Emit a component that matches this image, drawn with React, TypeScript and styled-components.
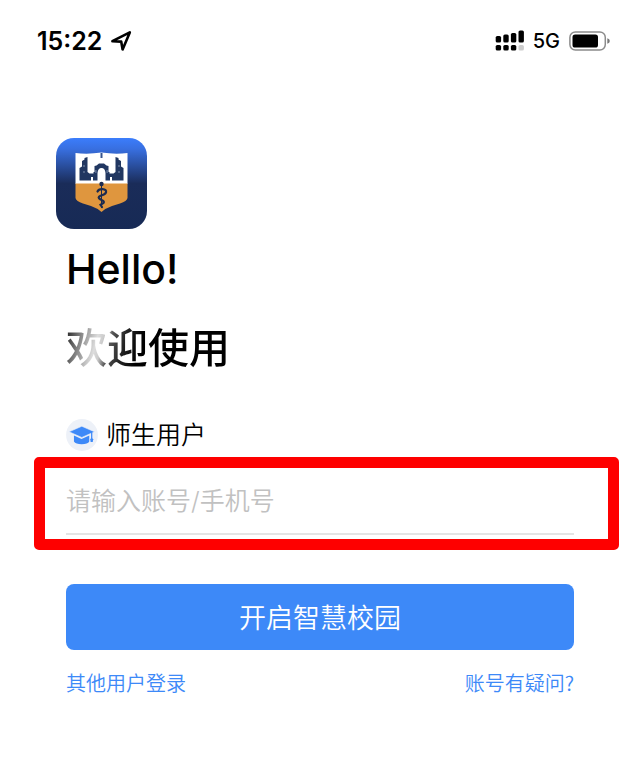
import React, { useState } from "react";
import styled, { createGlobalStyle } from "styled-components";

const BLUE = "#3d89f8";

const GlobalStyle = createGlobalStyle`
  * { box-sizing: border-box; }
  body {
    margin: 0;
    background: #fff;
    color: #000;
    font-family: Inter, "Noto Sans CJK SC", sans-serif;
  }
`;

const Screen = styled.div`
  padding-bottom: 40px;
`;

const StatusBar = styled.header`
  display: flex;
  align-items: center;
  justify-content: space-between;
  height: 82px;
  padding: 0 30px 0 37px;
`;

const StatusGroup = styled.div<{ $gap: number }>`
  display: flex;
  align-items: center;
  gap: ${(p) => p.$gap}px;
`;

const Time = styled.span`
  font-size: 25px;
  line-height: 32px;
  font-weight: 600;
`;

const Network = styled.span`
  font-size: 20px;
  line-height: 28px;
  font-weight: 450;
`;

const Main = styled.main`
  padding: 56px 66px 0;
`;

const Logo = styled.svg`
  display: block;
  width: 91px;
  height: 91px;
  margin-left: -10px;
`;

const Greeting = styled.h1`
  margin: 16px 0 0;
  font-size: 41px;
  line-height: 48px;
  font-weight: 500;
`;

const Welcome = styled.h2`
  width: fit-content;
  margin: 22px 0 0;
  font-family: "Noto Sans CJK SC", sans-serif;
  font-size: 41px;
  line-height: 60px;
  font-weight: 500;
  color: transparent;
  background: linear-gradient(105deg, #222 4px, #888 20px, #ddd 36px, #ccc 42px, #555 50px, #222 64px, #000 80px);
  background-clip: text;
`;

const UserType = styled.label`
  display: flex;
  align-items: flex-start;
  gap: 8px;
  width: fit-content;
  margin-top: 44px;
  font-family: "Noto Sans CJK SC", sans-serif;
  font-size: 25px;
  line-height: 28px;
  font-weight: 350;
`;

const Highlight = styled.div`
  margin: 6px -45px 0 -32px;
  padding: 11px 34px 4px 21px;
  border: 11px solid #fe0000;
  border-radius: 5px;
`;

const AccountInput = styled.input`
  display: block;
  width: 100%;
  height: 56px;
  padding: 0 0 10px;
  border: 0;
  border-bottom: 2px solid #e4e4e4;
  border-radius: 0;
  outline: 0;
  background: transparent;
  font-family: Inter, "Noto Sans CJK SC", sans-serif;
  font-size: 25px;
  font-weight: 350;
  &::placeholder {
    color: #c1c1c1;
    opacity: 1;
  }
`;

const SubmitButton = styled.button`
  display: block;
  width: 100%;
  height: 66px;
  margin-top: 34px;
  padding: 0;
  border: 0;
  border-radius: 8px;
  background: ${BLUE};
  color: #fff;
  font-family: "Noto Sans CJK SC", sans-serif;
  font-size: 27px;
  line-height: 40px;
  font-weight: 350;
  cursor: pointer;
`;

const Links = styled.nav`
  display: flex;
  justify-content: space-between;
  margin-top: 19px;
`;

const TextLink = styled.a`
  color: ${BLUE};
  font-family: "Noto Sans CJK SC", sans-serif;
  font-size: 20px;
  line-height: 28px;
  font-weight: 350;
  text-decoration: none;
`;

function LocationIcon() {
  return (
    <svg width="22" height="22" viewBox="0 0 22 22" aria-hidden="true">
      <path d="M2.4 11.2 L19.8 2.4 L12.6 19.4 L11.2 11.6 Z" fill="none" stroke="#000" strokeWidth="2.6" strokeLinejoin="round" />
    </svg>
  );
}

function SignalIcon() {
  const tops = [6, 4.5, 3, 0.5];
  return (
    <svg width="29" height="22" viewBox="0 0 29 22" aria-hidden="true">
      {tops.map((top, i) => (
        <g key={top}>
          <rect x={0.7 + i * 7.6} y={top} width="5.4" height={12.5 - top} rx="1.6" />
          <rect x={0.7 + i * 7.6} y="15" width="5.4" height="5.6" rx="1.6" fill={i === 3 ? "#ccc" : "#000"} />
        </g>
      ))}
    </svg>
  );
}

function BatteryIcon() {
  return (
    <svg width="41" height="20" viewBox="0 0 41 20" aria-hidden="true">
      <rect x="0.9" y="0.9" width="35.4" height="18.2" rx="5.5" fill="none" stroke="#8b8b8b" strokeWidth="1.5" />
      <rect x="3.5" y="3.5" width="25.5" height="13" rx="2.6" />
      <path d="M38.3 7.2 Q40.8 8 40.8 10 Q40.8 12 38.3 12.8 Z" fill="#777" />
    </svg>
  );
}

function SchoolLogo() {
  return (
    <Logo viewBox="0 0 91 91" role="img" aria-label="校徽">
      <defs>
        <linearGradient id="tile" x1="0" y1="0" x2="0" y2="1">
          <stop offset="0" stopColor="#3b7dfc" />
          <stop offset="0.12" stopColor="#386fe0" />
          <stop offset="0.5" stopColor="#1a2c59" />
          <stop offset="1" stopColor="#172a55" />
        </linearGradient>
      </defs>
      <rect width="91" height="91" rx="18" fill="url(#tile)" />
      <path d="M19.5 15 Q32 16.5 45.5 14.5 Q59 16.5 71.5 15 V46 H19.5 Z" fill="#fff" />
      <path d="M19.5 45.5 H71.5 V60 Q71 63 64 65.5 L56 68 Q50 70 45.5 74 Q41 70 35 68 L27 65.5 Q20 63 19.5 60 Z" fill="#df963e" />
      <path
        d="M23.5 42.5 V30 L26 28.5 V23 L28.5 21.5 V20 L31.5 19 V34 L33.5 35.5 H37.5 V34 H38.5 V28 L40.5 27.5 L43 25.5 H48 L50.5 27.5 L52.5 28 V34 H53.5 V35.5 H57.5 L59.5 34 V19 L62.5 20 V21.5 L65 23 V28.5 L67.5 30 V42.5 H56 V39 H54 V42.5 H49.5 V35 Q49 30 45.5 30 Q42 30 41.5 35 V42.5 H37 V39 H35 V42.5 Z"
        fill="#213761"
      />
      <path d="M28 27 V29 M28 33 V35 M63 27 V29 M63 33 V35 M39.9 32 V35 M51.1 32 V35" stroke="#7f90ad" strokeWidth="1" />
      <path d="M45.5 15 V20" stroke="#36558f" strokeWidth="2" />
      <circle cx="45.5" cy="46" r="2.2" fill="#1b2b50" />
      <path d="M45.5 46 V70" stroke="#1b2b50" strokeWidth="1" />
      <path d="M41.5 53.5 Q42.5 51 46.5 51.2 Q50.8 51.5 50 54.5 Q49 56.5 44.5 57.8 Q40.8 59.5 44.5 61.5 Q49 63.2 47.5 65 L44.5 66.8 L46 69" fill="none" stroke="#1b2b50" strokeWidth="2.2" strokeLinecap="round" />
    </Logo>
  );
}

function GraduateIcon() {
  return (
    <svg width="32" height="32" viewBox="0 0 33 33" aria-hidden="true">
      <circle cx="16.5" cy="16.5" r="16.4" fill="#edf1f8" />
      <path d="M8.2 17 L16 20.5 L24 17 V23.2 Q22.5 26 16.2 26 Q10 26 8.2 23.2 Z" fill={BLUE} />
      <path d="M16.3 7.5 L29.4 13.2 L16.3 19 L3.2 13.2 Z" fill={BLUE} stroke="#edf1f8" strokeWidth="0.6" />
      <path d="M26.5 13.5 V20" stroke={BLUE} strokeWidth="1.3" />
      <path d="M26.5 19 L28 21 L27.6 23.7 H25.4 L25 21 Z" fill={BLUE} />
    </svg>
  );
}

export default function App() {
  const [account, setAccount] = useState("");
  return (
    <Screen>
      <GlobalStyle />
      <StatusBar>
        <StatusGroup $gap={8}>
          <Time>15:22</Time>
          <LocationIcon />
        </StatusGroup>
        <StatusGroup $gap={9}>
          <SignalIcon />
          <Network>5G</Network>
          <BatteryIcon />
        </StatusGroup>
      </StatusBar>
      <Main>
        <SchoolLogo />
        <Greeting>Hello!</Greeting>
        <Welcome>欢迎使用</Welcome>
        <form onSubmit={(e) => e.preventDefault()}>
          <UserType htmlFor="account">
            <GraduateIcon />
            师生用户
          </UserType>
          <Highlight>
            <AccountInput
              id="account"
              type="text"
              placeholder="请输入账号/手机号"
              value={account}
              onChange={(e) => setAccount(e.target.value)}
            />
          </Highlight>
          <SubmitButton type="submit">开启智慧校园</SubmitButton>
        </form>
        <Links>
          <TextLink href="#other">其他用户登录</TextLink>
          <TextLink href="#help">账号有疑问?</TextLink>
        </Links>
      </Main>
    </Screen>
  );
}
